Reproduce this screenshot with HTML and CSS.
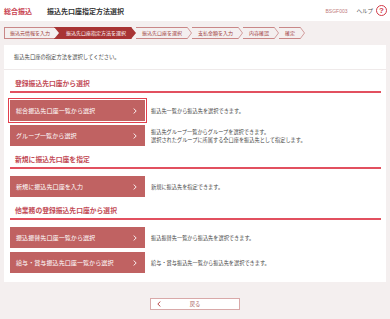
FILE: index.html
```html
<!DOCTYPE html>
<html lang="ja">
<head>
  <meta charset="utf-8">
  <title>振込先口座指定方法選択</title>
  <link rel="stylesheet" href="styles.css">
</head>
<body>
<header class="top">
  <span class="service">総合振込</span>
  <h1 class="page-title">振込先口座指定方法選択</h1>
  <span class="screen-id">BSGF003</span>
  <a class="help">ヘルプ<span class="help-icon">?</span></a>
</header>

<main class="main">
  <ol class="steps">
    <li class="step first">振込元情報を入力</li>
    <li class="step active">振込先口座指定方法を選択</li>
    <li class="step">振込先口座を選択</li>
    <li class="sep"><svg width="5" height="12" viewBox="0 0 5 12"><polyline points="0,0 4.5,6 0,12" fill="none" stroke="#c98787" stroke-width="0.8"/></svg></li>
    <li class="step">支払金額を入力</li>
    <li class="sep"><svg width="5" height="12" viewBox="0 0 5 12"><polyline points="0,0 4.5,6 0,12" fill="none" stroke="#c98787" stroke-width="0.8"/></svg></li>
    <li class="step">内容確認</li>
    <li class="sep"><svg width="5" height="12" viewBox="0 0 5 12"><polyline points="0,0 4.5,6 0,12" fill="none" stroke="#c98787" stroke-width="0.8"/></svg></li>
    <li class="step">確定</li>
    <li class="sep last"><svg width="5" height="12" viewBox="0 0 5 12"><polyline points="0,0 4.5,6 0,12" fill="none" stroke="#c98787" stroke-width="0.8"/></svg></li>
  </ol>

  <div class="panel">
    <p class="lead">振込先口座の指定方法を選択してください。</p>
    <div class="panel-body">
      <h2 class="sec">登録振込先口座から選択</h2>
      <div class="row">
        <a class="btn focused">総合振込先口座一覧から選択<svg class="chev" width="4" height="6" viewBox="0 0 4 6"><polyline points="0.6,0.5 3.2,3 0.6,5.5" fill="none" stroke="#fff" stroke-width="0.9"/></svg></a>
        <p class="desc">振込先一覧から振込先を選択できます。</p>
      </div>
      <div class="row">
        <a class="btn">グループ一覧から選択<svg class="chev" width="4" height="6" viewBox="0 0 4 6"><polyline points="0.6,0.5 3.2,3 0.6,5.5" fill="none" stroke="#fff" stroke-width="0.9"/></svg></a>
        <p class="desc">振込先グループ一覧からグループを選択できます。<br>選択されたグループに所属する全口座を振込先として指定します。</p>
      </div>

      <h2 class="sec">新規に振込先口座を指定</h2>
      <div class="row">
        <a class="btn">新規に振込先口座を入力<svg class="chev" width="4" height="6" viewBox="0 0 4 6"><polyline points="0.6,0.5 3.2,3 0.6,5.5" fill="none" stroke="#fff" stroke-width="0.9"/></svg></a>
        <p class="desc">新規に振込先を指定できます。</p>
      </div>

      <h2 class="sec">他業務の登録振込先口座から選択</h2>
      <div class="row">
        <a class="btn">振込振替先口座一覧から選択<svg class="chev" width="4" height="6" viewBox="0 0 4 6"><polyline points="0.6,0.5 3.2,3 0.6,5.5" fill="none" stroke="#fff" stroke-width="0.9"/></svg></a>
        <p class="desc">振込振替先一覧から振込先を選択できます。</p>
      </div>
      <div class="row">
        <a class="btn">給与・賞与振込先口座一覧から選択<svg class="chev" width="4" height="6" viewBox="0 0 4 6"><polyline points="0.6,0.5 3.2,3 0.6,5.5" fill="none" stroke="#fff" stroke-width="0.9"/></svg></a>
        <p class="desc">給与・賞与振込先一覧から振込先を選択できます。</p>
      </div>
    </div>
  </div>

  <div class="back-wrap">
    <a class="back"><svg class="back-chev" width="4" height="6" viewBox="0 0 4 6"><polyline points="3.4,0.5 0.8,3 3.4,5.5" fill="none" stroke="#b84a4a" stroke-width="1"/></svg><span class="back-label">戻る</span></a>
  </div>
</main>
</body>
</html>
```

FILE: styles.css
```css
* {
  box-sizing: border-box;
}
body {
  margin: 0;
  background: #f4efef;
  font-family: "Noto Sans CJK JP", "Noto Sans", sans-serif;
  color: #333;
}

/* header */
.top {
  display: flex;
  align-items: center;
  height: 21px;
  padding: 0 3px 0 4px;
  background: #fff;
}
.service {
  font-size: 7px;
  font-weight: bold;
  color: #c8414e;
  width: 43px;
}
.page-title {
  margin: 0;
  font-size: 7px;
  font-weight: bold;
  color: #333;
  flex: 1;
}
.screen-id {
  font-size: 5px;
  color: #c07a7a;
  margin-right: 9px;
  font-family: "Liberation Sans", sans-serif;
}
.help {
  display: flex;
  align-items: center;
  font-size: 5.5px;
  color: #555;
}
.help-icon {
  display: flex;
  align-items: center;
  justify-content: center;
  width: 11px;
  height: 11px;
  margin-left: 3px;
  border: 1.3px solid #d23a48;
  border-radius: 50%;
  font-size: 8px;
  font-weight: bold;
  color: #d23a48;
  font-family: "Liberation Sans", sans-serif;
}

/* steps */
.main {
  padding: 6px 4px 0 4px;
}
.steps {
  display: flex;
  margin: 0;
  padding: 0;
  list-style: none;
  height: 12px;
}
.step {
  height: 12px;
  line-height: 10px;
  padding: 0 5px 0 6px;
  font-size: 5px;
  color: #9e3c3c;
  border-top: 1px solid #c98787;
  border-bottom: 1px solid #c98787;
  white-space: nowrap;
}
.step.first {
  border-left: 1px solid #c98787;
  padding-left: 5px;
}
.step.active {
  margin-left: -1px;
  width: 82px;
  padding-left: 12px;
  color: #fff;
  background: #a83434;
  border-color: #a83434;
  clip-path: polygon(0 0, calc(100% - 5px) 0, 100% 50%, calc(100% - 5px) 100%, 0 100%, 5px 50%);
}
.sep {
  height: 12px;
  display: flex;
}
.sep svg {
  display: block;
}

/* panel */
.panel {
  margin-top: 6px;
  background: #fff;
}
.lead {
  margin: 0;
  height: 25px;
  line-height: 25px;
  padding-left: 10px;
  font-size: 5.3px;
  color: #444;
  border-bottom: 1px solid #efeaea;
}
.panel-body {
  padding: 4px 5px 9px 6px;
}
.sec {
  margin: 0 0 7px 0;
  padding: 4px 0 3px 5px;
  line-height: 10px;
  font-size: 6.8px;
  font-weight: bold;
  color: #c24a55;
  border-bottom: 2px solid #e2505f;
}
.row {
  display: flex;
  align-items: center;
  margin-bottom: 4px;
}
.row:last-child {
  margin-bottom: 0;
}
.sec + .row + .row + .sec,
.row + .sec {
  margin-top: 0;
}
.btn {
  display: flex;
  align-items: center;
  justify-content: space-between;
  flex: none;
  width: 135px;
  height: 21px;
  padding: 0 8px 0 6px;
  background: #c06262;
  color: #fff;
  font-size: 6.1px;
}
.btn.focused {
  outline: 1px solid #e2404e;
  outline-offset: 1px;
}
.chev {
  display: block;
}
.desc {
  margin: 0 0 0 6px;
  font-size: 5.2px;
  line-height: 8px;
  color: #444;
}

/* back */
.back-wrap {
  display: flex;
  justify-content: center;
  padding-top: 16px;
}
.back {
  display: flex;
  align-items: center;
  width: 90px;
  height: 12px;
  padding-left: 6px;
  background: #fff;
  border: 1px solid #d9a9a9;
  font-size: 5.3px;
  color: #a85a5a;
}
.back-label {
  flex: 1;
  text-align: center;
  padding-right: 10px;
}
```
